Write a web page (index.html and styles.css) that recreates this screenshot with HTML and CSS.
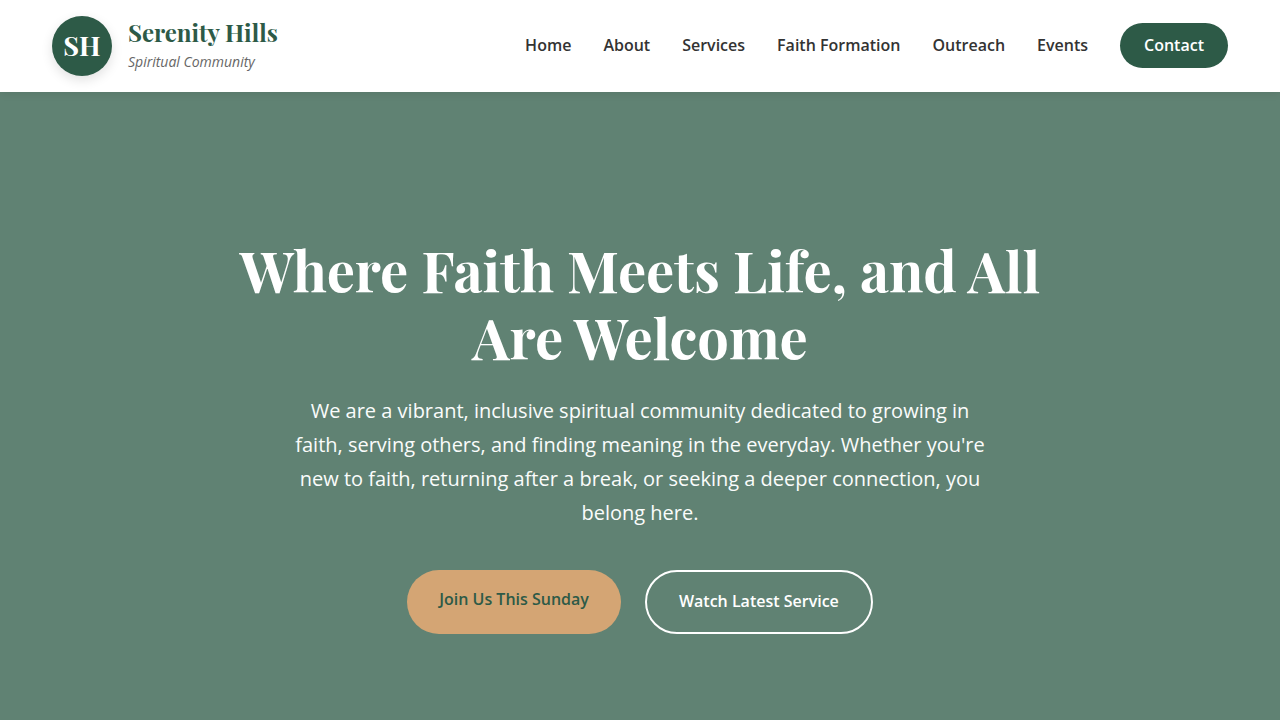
FILE: index.html
```html
<!DOCTYPE html>
<html lang="en">
<head>
<meta charset="utf-8">
<meta name="viewport" content="width=device-width, initial-scale=1">
<title>Serenity Hills Spiritual Community</title>
<link rel="stylesheet" href="styles.css">
</head>
<body>
<header class="header">
  <div class="header-inner">
    <a class="brand" href="#">
      <span class="brand-mark">SH</span>
      <span class="brand-text">
        <span class="brand-name">Serenity Hills</span>
        <span class="brand-tagline">Spiritual Community</span>
      </span>
    </a>
    <nav class="nav" aria-label="Main">
      <a class="nav-link" href="#">Home</a>
      <a class="nav-link" href="#">About</a>
      <a class="nav-link" href="#">Services</a>
      <a class="nav-link" href="#">Faith Formation</a>
      <a class="nav-link" href="#">Outreach</a>
      <a class="nav-link" href="#">Events</a>
      <a class="nav-link nav-contact" href="#">Contact</a>
    </nav>
  </div>
</header>
<main class="hero">
  <div class="hero-content">
    <h1 class="hero-title">Where Faith Meets Life, and All Are Welcome</h1>
    <p class="hero-lead">We are a vibrant, inclusive spiritual community dedicated to growing in faith, serving others, and finding meaning in the everyday. Whether you're new to faith, returning after a break, or seeking a deeper connection, you belong here.</p>
    <div class="hero-actions">
      <a class="button button-primary" href="#">Join Us This Sunday</a>
      <a class="button button-outline" href="#">Watch Latest Service</a>
    </div>
  </div>
</main>
</body>
</html>
```
FILE: styles.css
```css
* { box-sizing: border-box; }

body {
  margin: 0;
  min-height: 100vh;
  display: flex;
  flex-direction: column;
  font-family: "Open Sans", "Noto Sans", sans-serif;
  font-size: 16px;
  line-height: 27px;
  color: #333;
  background: #fff;
}

a { color: inherit; text-decoration: none; }

.header {
  position: relative;
  background: #fff;
  box-shadow: 0 2px 8px rgba(0, 0, 0, 0.08);
}

.header-inner {
  max-width: 1200px;
  margin: 0 auto;
  padding: 16px 12px;
  display: flex;
  align-items: center;
  justify-content: space-between;
}

.brand { display: flex; align-items: center; gap: 16px; }

.brand-mark {
  width: 60px;
  height: 60px;
  padding-bottom: 2px;
  border-radius: 50%;
  display: flex;
  align-items: center;
  justify-content: center;
  background: #2d5a47;
  color: #fff;
  font-family: "Playfair Display", "Liberation Serif", serif;
  font-size: 27px;
  font-weight: 700;
  box-shadow: 0 4px 12px rgba(0, 0, 0, 0.12);
}

.brand-text { display: flex; flex-direction: column; }

.brand-name {
  font-family: "Playfair Display", "Liberation Serif", serif;
  font-size: 24px;
  line-height: 32px;
  font-weight: 700;
  color: #2d5a47;
}

.brand-tagline {
  font-size: 14px;
  line-height: 28px;
  font-style: italic;
  color: #666;
}

.nav {
  display: flex;
  align-items: center;
  gap: 32px;
  padding-bottom: 2px;
}

.nav-link { font-weight: 600; }

.nav-contact {
  padding: 9px 24px;
  border-radius: 50px;
  background: #2d5a47;
  color: #fff;
}

.hero {
  flex: 1;
  display: flex;
  align-items: center;
  justify-content: center;
  padding: 57px 20px 0;
  background: #608273;
  color: #fff;
  text-align: center;
}

.hero-content { max-width: 900px; }

.hero-title {
  margin: 0 0 24px;
  font-family: "Playfair Display", "Liberation Serif", serif;
  font-size: 56px;
  line-height: 67px;
  font-weight: 700;
}

.hero-lead {
  max-width: 700px;
  margin: 0 auto 40px;
  font-size: 20px;
  line-height: 34px;
  color: #fafcfb;
}

.hero-actions {
  display: flex;
  flex-wrap: wrap;
  justify-content: center;
  gap: 24px;
}

.button {
  padding: 16px 32px 17px;
  border-radius: 50px;
  font-weight: 600;
}

.button-primary { background: #d4a574; color: #2d5a47; }

.button-outline { border: 2px solid #fff; }
```
